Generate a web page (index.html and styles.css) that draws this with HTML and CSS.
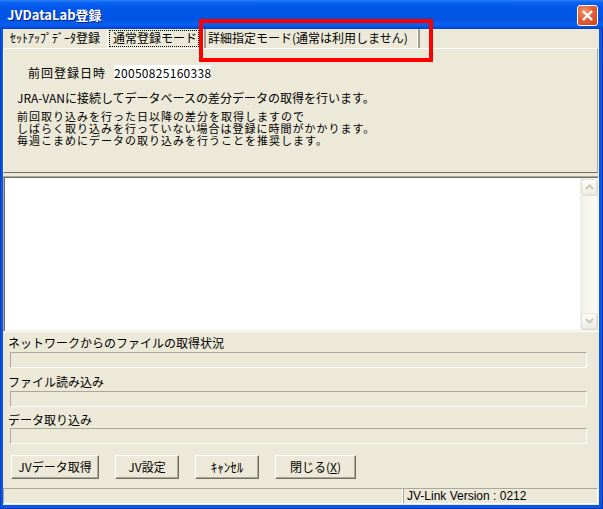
FILE: index.html
```html
<!DOCTYPE html>
<html lang="ja">
<head>
<meta charset="utf-8">
<title>JVDataLab登録</title>
<link rel="stylesheet" href="styles.css">
</head>
<body>
<div class="window">
  <div class="titlebar">
    <span class="title">JVDataLab登録</span>
    <span class="close">
      <svg width="19" height="19" viewBox="0 0 19 19"><path d="M5 5 L14 14 M14 5 L5 14" stroke="#fff" stroke-width="2.4" fill="none"/></svg>
    </span>
  </div>
  <div class="frame">
    <div class="client">
      <div class="tabs">
        <div class="tab t1">ｾｯﾄｱｯﾌﾟﾃﾞｰﾀ登録</div>
        <div class="tab t2"><span class="focus">通常登録モード</span></div>
        <div class="sep"></div>
        <div class="tab t3">詳細指定モード(通常は利用しません)</div>
        <div class="sep"></div>
      </div>
      <div class="panel">
        <div class="lastreg"><span class="lbl">前回登録日時</span><span class="date">20050825160338</span></div>
        <div class="msg">JRA-VANに接続してデータベースの差分データの取得を行います。</div>
        <div class="msg msg2">
          <div class="mline">前回取り込みを行った日以降の差分を取得しますので</div>
          <div class="mline">しばらく取り込みを行っていない場合は登録に時間がかかります。</div>
          <div class="mline">毎週こまめにデータの取り込みを行うことを推奨します。</div>
        </div>
      </div>
      <div class="log">
        <div class="logbody"></div>
        <div class="vscroll">
          <div class="sbbtn"><svg width="9" height="6" viewBox="0 0 9 6"><path d="M1 5 L4.5 1.5 L8 5" stroke="#c9c6b6" stroke-width="2" fill="none"/></svg></div>
          <div class="sbbtn"><svg width="9" height="6" viewBox="0 0 9 6"><path d="M1 1 L4.5 4.5 L8 1" stroke="#c9c6b6" stroke-width="2" fill="none"/></svg></div>
        </div>
      </div>
      <div class="plabel l1">ネットワークからのファイルの取得状況</div>
      <div class="pbar b1"></div>
      <div class="plabel l2">ファイル読み込み</div>
      <div class="pbar b2"></div>
      <div class="plabel l3">データ取り込み</div>
      <div class="pbar b3"></div>
      <div class="buttons">
        <div class="btn w88">JVデータ取得</div>
        <div class="btn w64">JV設定</div>
        <div class="btn w64 kana">ｷｬﾝｾﾙ</div>
        <div class="btn w81">閉じる(<u>X</u>)</div>
      </div>
      <div class="statusbar">
        <div class="sbp sbl"></div>
        <div class="sbp sbr">JV-Link Version : 0212</div>
      </div>
    </div>
  </div>
  <div class="highlight"></div>
</div>
</body>
</html>
```

FILE: styles.css
```css
* { box-sizing: border-box; }
html, body { margin: 0; padding: 0; }
body {
  width: 603px;
  height: 509px;
  overflow: hidden;
  font-family: "Noto Sans CJK JP", sans-serif;
  font-size: 12px;
  color: #000;
  background: #0a56e6;
}
.window {
  position: relative;
  width: 603px;
  height: 509px;
  display: flex;
  flex-direction: column;
}
.titlebar {
  height: 29px;
  flex: none;
  display: flex;
  align-items: flex-start;
  justify-content: space-between;
  padding: 5px 5px 0 7px;
  background: linear-gradient(to bottom, #2a7ff8 0px, #0660f0 3px, #0056e8 8px, #0054e3 18px, #0a5ff0 25px, #0550e0 27px, #003fc8 29px);
}
.title {
  margin-top: 1px;
  color: #fff;
  font-weight: bold;
  font-size: 13px;
  line-height: 17px;
  text-shadow: 1px 1px 0 #0a1e8a;
}
.close {
  width: 21px;
  height: 21px;
  border: 1px solid #fff;
  border-radius: 3px;
  background: radial-gradient(circle at 35% 30%, #f29a72 0%, #e2603a 45%, #c9421f 100%);
  display: flex;
  align-items: center;
  justify-content: center;
}
.close svg { display: block; }
.frame {
  flex: 1;
  display: flex;
  padding: 0 4px 4px 3px;
  background: #0a56e6;
  box-shadow: inset 1px 0 0 #0841c8, inset -1px 0 0 #0036b8, inset 0 -1px 0 #0036b8;
}
.client {
  flex: 1;
  background: #ece9d8;
  display: flex;
  flex-direction: column;
}

/* tabs */
.tabs {
  height: 19px;
  flex: none;
  display: flex;
  padding-left: 4px;
}
.tab {
  line-height: 12px;
  white-space: nowrap;
}
.t1 { width: 100px; padding: 3px 0 0 3px; }
.t2 {
  width: 96px;
  border-left: 1px solid #fff;
  padding: 1px 0 0 1px;
}
.focus {
  display: block;
  width: 90px;
  height: 17px;
  border: 1px dotted #000;
  padding: 1px 0 0 3px;
}
.sep {
  width: 3px;
  border-left: 1px solid #fff;
  background: #a19e91;
}
.t3 { width: 211px; padding: 3px 0 0 2px; }

/* panel */
.panel {
  height: 125px;
  flex: none;
  margin-right: 1px;
  border-top: 1px solid #fff;
  border-left: 1px solid #fff;
  border-right: 1px solid #aca899;
  border-bottom: 1px solid #716f64;
  padding-top: 16px;
}
.lastreg {
  display: flex;
  align-items: center;
  height: 15px;
  padding-left: 24px;
}
.lbl { letter-spacing: 1px; line-height: 12px; }
.date {
  margin-left: 8px;
  width: 97px;
  height: 15px;
  background: #fff;
  line-height: 15px;
  text-align: center;
  letter-spacing: 0.3px;
}
.msg { margin: 12px 0 0 13px; line-height: 12px; white-space: nowrap; }
.msg2 { margin-top: 6px; }
.mline {
  height: 12px;
  font-size: 11px;
  line-height: 12px;
  letter-spacing: 1px;
}

/* log */
.log {
  height: 156px;
  flex: none;
  margin-top: 3px;
  display: flex;
  background: #fff;
  border: 1px solid;
  border-color: #aca899 #fff #fff #aca899;
  box-shadow: inset 1px 1px 0 #716f64, inset -1px -1px 0 #f1efe2;
  padding: 1px;
}
.logbody { flex: 1; }
.vscroll {
  width: 17px;
  display: flex;
  flex-direction: column;
  justify-content: space-between;
  background: linear-gradient(to right, #f2f0e8, #fcfcf9);
  padding: 1px 0 1px 1px;
}
.sbbtn {
  width: 16px;
  height: 16px;
  border: 1px solid #e4e2d8;
  border-radius: 2px;
  background: linear-gradient(to bottom, #fcfcfa, #eeede6);
  box-shadow: 1px 1px 0 #dedcd1;
  display: flex;
  align-items: center;
  justify-content: center;
}
.sbbtn svg { display: block; }

/* progress */
.plabel { margin: 5px 0 0 5px; line-height: 12px; white-space: nowrap; }
.l2 { margin-top: 8px; }
.l3 { margin-top: 7px; }
.pbar {
  margin: 3px 0 0 7px;
  width: 577px;
  height: 16px;
  flex: none;
  border: 1px solid;
  border-color: #aca899 #fff #fff #aca899;
}
.b3 { margin-top: 2px; }

/* buttons */
.buttons {
  margin-top: 11px;
  padding-left: 8px;
  display: flex;
  gap: 16px;
}
.btn {
  height: 24px;
  border: 1px solid;
  border-color: #fff #716f64 #716f64 #fff;
  box-shadow: inset -1px -1px 0 #aca899;
  background: #ece9d8;
  line-height: 22px;
  text-align: center;
  white-space: nowrap;
}
.btn.kana { font-size: 13px; }
.btn u { text-underline-offset: 1px; }
.w88 { width: 88px; }
.w64 { width: 64px; }
.w81 { width: 81px; }

/* status bar */
.statusbar {
  margin-top: auto;
  margin-bottom: 1px;
  height: 16px;
  display: flex;
}
.sbp {
  border: 1px solid;
  border-color: #aca899 #fff #fff #aca899;
}
.sbl { width: 400px; }
.sbr {
  flex: 1;
  margin-right: 1px;
  padding-left: 3px;
  font-family: "Liberation Sans", Arial, sans-serif;
  font-size: 12px;
  line-height: 14px;
  white-space: nowrap;
}

/* annotation overlay */
.highlight {
  position: absolute;
  left: 199px;
  top: 19px;
  width: 234px;
  height: 43px;
  border: 4px solid #ff0000;
  pointer-events: none;
}
```
